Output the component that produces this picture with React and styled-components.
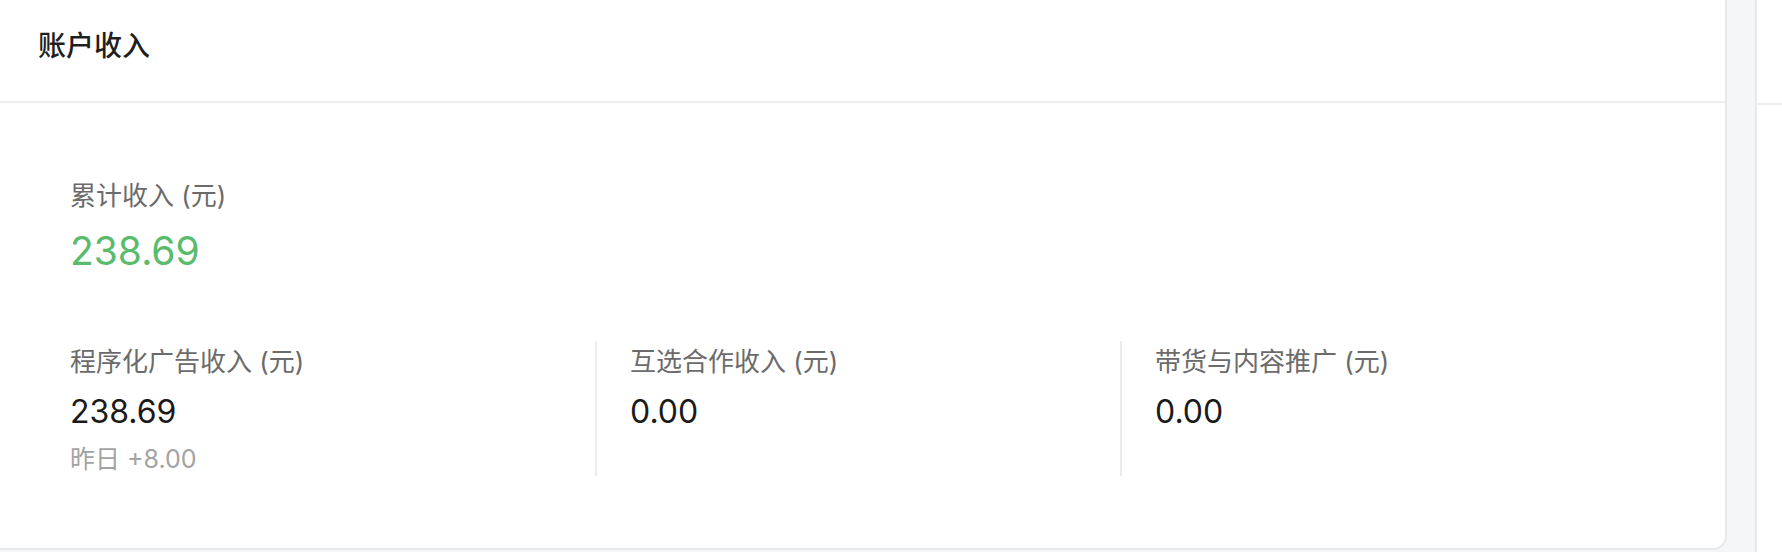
import styled, { createGlobalStyle } from "styled-components";

const GlobalStyle = createGlobalStyle`
    html, body {
        margin: 0;
        padding: 0;
        background: #f5f6f8;
        font-family: Inter, "Noto Sans CJK SC", sans-serif;
    }
`

const stats = [
    { label: "程序化广告收入 (元)", value: "238.69", yesterday: "+8.00" },
    { label: "互选合作收入 (元)", value: "0.00" },
    { label: "带货与内容推广 (元)", value: "0.00" },
]

const App = () => {
    return (
        <>
            <GlobalStyle />
            <Page>
                <Card>
                    <CardHeader>
                        <Title>账户收入</Title>
                    </CardHeader>
                    <CardBody>
                        <Label>累计收入 (元)</Label>
                        <TotalValue>238.69</TotalValue>
                        <StatsRow>
                            {stats.map((s) => (
                                <StatCol key={s.label}>
                                    <Label>{s.label}</Label>
                                    <StatValue>{s.value}</StatValue>
                                    {s.yesterday && <Yesterday>昨日 {s.yesterday}</Yesterday>}
                                </StatCol>
                            ))}
                        </StatsRow>
                    </CardBody>
                </Card>
                <SidePanel>
                    <SideHeader />
                </SidePanel>
            </Page>
        </>
    )
}

const Page = styled.div`
    display: flex;
    align-items: flex-start;
    gap: 28px;
    height: 552px;
    overflow: hidden;
`
const Card = styled.section`
    width: 1725px;
    flex-shrink: 0;
    background: #fff;
    border-right: 2px solid #e7e8ea;
    border-bottom: 2px solid #e7e8ea;
    border-bottom-right-radius: 14px;
`
const CardHeader = styled.header`
    height: 103px;
    box-sizing: border-box;
    padding: 32px 0 0 38px;
    border-bottom: 2px solid #eeeeee;
`
const Title = styled.h2`
    margin: 0;
    font-size: 28px;
    line-height: 28px;
    font-weight: 500;
    color: #1f1f1f;
`
const CardBody = styled.div`
    padding: 80px 80px 72px 70px;
`
const Label = styled.div`
    font-size: 26px;
    line-height: 26px;
    color: #6b6b6b;
    white-space: nowrap;
`
const TotalValue = styled.div`
    margin-top: 22px;
    font-size: 39px;
    line-height: 39px;
    color: #59bb6c;
`
const StatsRow = styled.div`
    margin-top: 71px;
    display: grid;
    grid-template-columns: repeat(3, 1fr);
`
const StatCol = styled.div`
    padding: 8px 0 4px 33px;
    border-left: 2px solid #ececec;
    &:first-child {
        padding-left: 0;
        border-left: none;
    }
`
const StatValue = styled.div`
    margin-top: 21px;
    font-size: 32px;
    line-height: 32px;
    color: #1a1a1a;
`
const Yesterday = styled.div`
    margin-top: 19px;
    font-size: 25px;
    line-height: 25px;
    color: #a3a3a3;
`
const SidePanel = styled.aside`
    flex: 1;
    align-self: stretch;
    background: #fff;
    border-left: 2px solid #e7e8ea;
`
const SideHeader = styled.div`
    height: 103px;
    border-bottom: 2px solid #eeeeee;
`

export default App
